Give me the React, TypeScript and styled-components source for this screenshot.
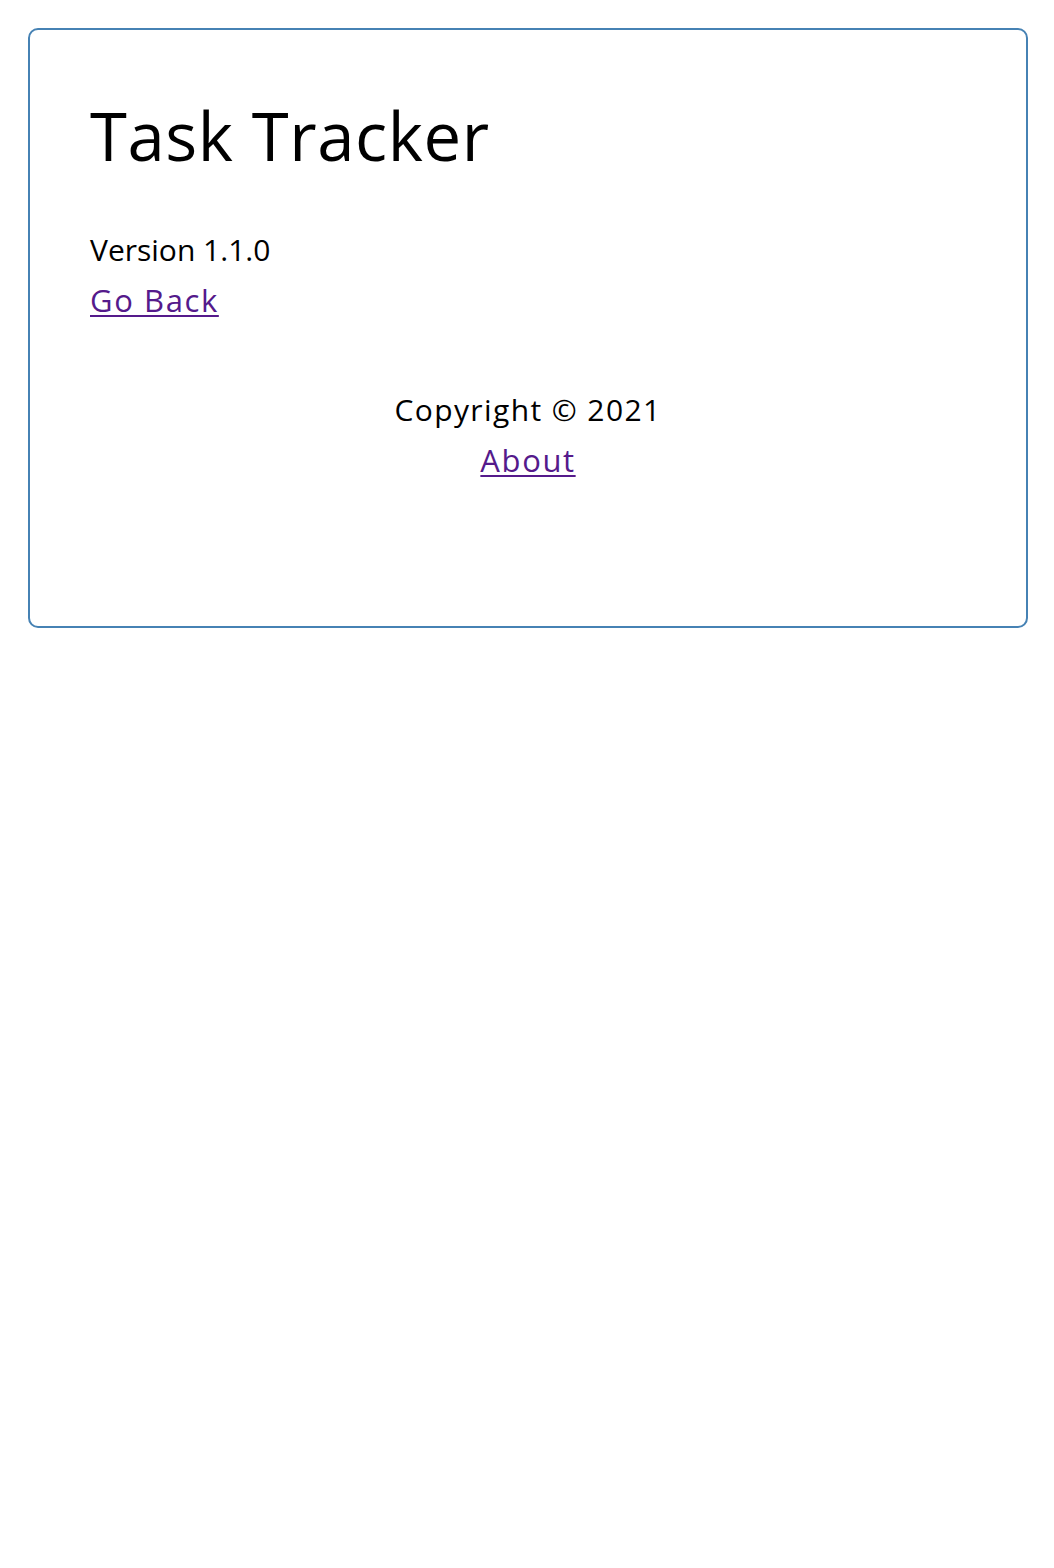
import React from "react";
import styled, { createGlobalStyle } from "styled-components";

const Global = createGlobalStyle`
  html, body { margin: 0; padding: 0; background: #fff; }
  body { font-family: "Open Sans", "Liberation Sans", sans-serif; color: #000; }
  * { box-sizing: border-box; }
`;

const Page = styled.div`
  padding: 28px 26px 28px 28px;
`;

const Card = styled.div`
  width: 1000px;
  min-height: 600px;
  border: 2px solid steelblue;
  border-radius: 10px;
  padding: 60px;
`;

const Title = styled.h1`
  margin: 5px 0 0;
  font-size: 67px;
  line-height: 80px;
  font-weight: 400;
  letter-spacing: 0.6px;
`;

const Body = styled.div`
  margin-top: 50px;
`;

const Line = styled.div<{ $spacing?: number }>`
  font-size: 30px;
  line-height: 50px;
  letter-spacing: ${(p) => p.$spacing ?? 0}px;
`;

const Link = styled.a`
  display: inline-block;
  font-size: 31px;
  line-height: 50px;
  letter-spacing: 1.6px;
  color: #551a8b;
  text-decoration: underline;
  text-underline-offset: 3px;
  text-decoration-thickness: 2px;
`;

const Footer = styled.footer`
  margin-top: 60px;
  text-align: center;
`;

export default function App() {
  return (
    <>
      <Global />
      <Page>
        <Card>
          <Title>Task Tracker</Title>
          <Body>
            <Line>Version 1.1.0</Line>
            <Link href="#">Go Back</Link>
          </Body>
          <Footer>
            <Line $spacing={1.4}>Copyright © 2021</Line>
            <Link href="#">About</Link>
          </Footer>
        </Card>
      </Page>
    </>
  );
}
